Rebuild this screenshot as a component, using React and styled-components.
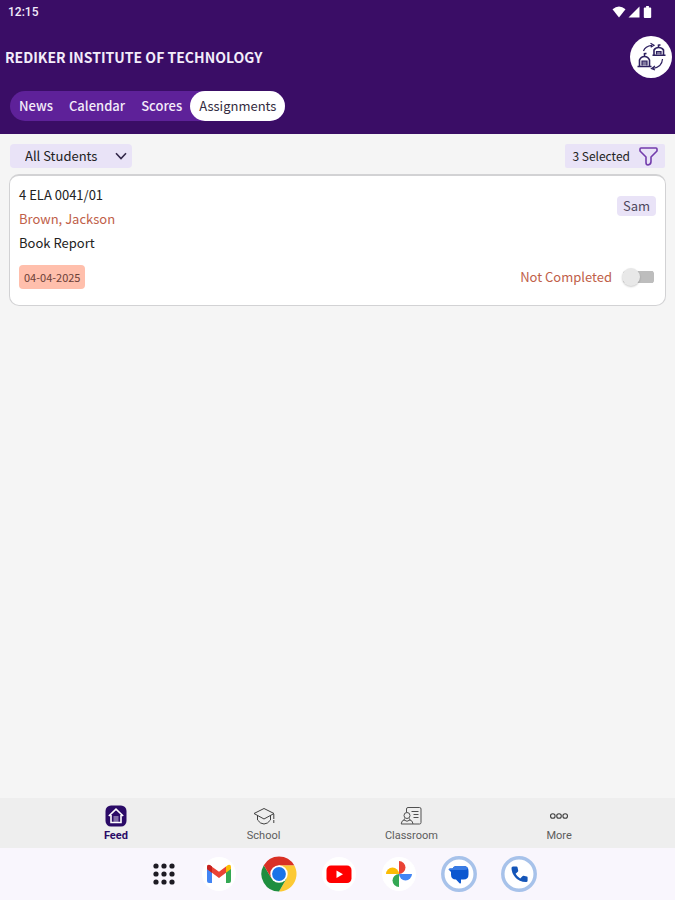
import React, { useState } from "react";
import styled, { createGlobalStyle, css } from "styled-components";

const GlobalStyle = createGlobalStyle`
  * { box-sizing: border-box; }
  body {
    margin: 0;
    background: #f5f5f5;
    color: #222;
    font-family: "Noto Sans CJK SC", "Noto Sans", sans-serif;
    font-size: 13px;
    line-height: 24px;
  }
  button, select, input { font: inherit; color: inherit; margin: 0; }
  button { border: 0; background: none; padding: 0; cursor: pointer; }
  svg { display: block; flex: none; }
`;

const Page = styled.div`
  min-height: 100vh;
  display: flex;
  flex-direction: column;
`;

const Header = styled.header`
  background: #3a0d66;
  color: #f3ecfa;
  padding-bottom: 13px;
`;

const StatusBar = styled.div`
  display: flex;
  justify-content: space-between;
  align-items: center;
  height: 24px;
  padding: 0 22px 0 8px;
  font-family: Roboto, sans-serif;
  font-size: 12px;
  font-weight: 500;
`;

const StatusIcons = styled.div`
  display: flex;
  gap: 2px;
`;

const TitleRow = styled.div`
  display: flex;
  justify-content: space-between;
  align-items: center;
  padding: 12px 3px 13px 5px;
`;

const Title = styled.h1`
  margin: 0;
  font-size: 14px;
  line-height: 24px;
  font-weight: 700;
`;

const SwitchButton = styled.button`
  display: grid;
  place-items: center;
  width: 42px;
  height: 42px;
  border-radius: 50%;
  background: #fff;
`;

const Tabs = styled.nav`
  display: inline-flex;
  margin-left: 10px;
  padding-left: 1px;
  border-radius: 15px;
  background: #5e2199;
  vertical-align: top;
`;

const Tab = styled.button`
  height: 30px;
  padding: 0 8px;
  border-radius: 15px;
  line-height: 30px;
  font-weight: 500;
  ${(p) =>
    p.$active &&
    css`
      padding: 0 9px;
      background: #fff;
      color: #332b40;
      font-weight: 400;
    `}
`;

const Main = styled.main`
  flex: 1;
  padding: 10px 9px;
`;

const Toolbar = styled.div`
  display: flex;
  justify-content: space-between;
  margin: 0 1px 6px;
`;

const StudentPicker = styled.label`
  display: flex;
  align-items: center;
  width: 122px;
  padding-right: 5px;
  border-radius: 4px;
  background: #e9e3f7;
`;

const StudentSelect = styled.select`
  flex: 1;
  min-width: 0;
  height: 24px;
  padding: 0 0 0 15px;
  border: 0;
  background: none;
  appearance: none;
  line-height: 24px;
`;

const FilterButton = styled.button`
  display: flex;
  align-items: center;
  gap: 9px;
  height: 24px;
  padding: 0 7px;
  border-radius: 2px;
  background: #e9e3f7;
  font-size: 12px;
`;

const Card = styled.article`
  padding: 7px 9px 16px;
  border: 1px solid #d2d2d4;
  border-top-width: 2px;
  border-radius: 10px;
  background: #fff;
`;

const CardRow = styled.div`
  display: flex;
  justify-content: space-between;
  align-items: ${(p) => p.$align || "center"};
  margin-top: ${(p) => (p.$spaced ? "10px" : "0")};
`;

const Line = styled.p`
  margin: 0;
  color: ${(p) => (p.$accent ? "#c06049" : "#222")};
`;

const Chip = styled.span`
  padding: 0 ${(p) => (p.$due ? "5px" : "6px")};
  border-radius: 4px;
  background: ${(p) => (p.$due ? "#ffbfac" : "#e9e3f7")};
  color: ${(p) => (p.$due ? "#6b4038" : "#4e485c")};
  font-size: ${(p) => (p.$due ? "11px" : "13px")};
  line-height: ${(p) => (p.$due ? "24px" : "20px")};
  margin-top: ${(p) => (p.$due ? "0" : "13px")};
`;

const Completion = styled.label`
  display: flex;
  align-items: center;
  gap: 10px;
  padding-right: 1px;
  color: #c06049;
`;

const Toggle = styled.input`
  appearance: none;
  display: flex;
  align-items: center;
  width: 33px;
  height: 20px;
  cursor: pointer;
  background: linear-gradient(#bdbdbd, #bdbdbd) center / 31px 12px no-repeat;
  border-radius: 10px;

  &::before {
    content: "";
    width: 18px;
    height: 18px;
    border-radius: 50%;
    background: #e8e8e8;
    box-shadow: 0 1px 2px rgba(0, 0, 0, 0.2);
  }
  &:checked { justify-content: flex-end; }
`;

const BottomNav = styled.nav`
  display: grid;
  grid-template-columns: repeat(4, 1fr);
  height: 50px;
  padding: 0 42px;
  background: #eee;
`;

const NavItem = styled.button`
  display: flex;
  flex-direction: column;
  align-items: center;
  gap: 1px;
  padding-top: 7px;
  font-family: Roboto, sans-serif;
  font-size: 11px;
  line-height: 16px;
  font-weight: ${(p) => (p.$active ? 700 : 400)};
  color: ${(p) => (p.$active ? "#2b0b67" : "#5c5c5c")};
`;

const Dock = styled.footer`
  display: flex;
  justify-content: center;
  align-items: center;
  gap: 24px;
  height: 52px;
  padding-left: 12px;
  background: #f9f6fd;
`;

const AppButton = styled.button`
  display: grid;
  place-items: center;
  width: ${(p) => (p.$narrow ? "26px" : "36px")};
  height: 36px;
`;

const WifiIcon = () => (
  <svg width="14" height="12" viewBox="0 0 14 12" aria-hidden="true">
    <path d="M.5 3.2Q7-2.2 13.5 3.2L7 11.5Z" fill="#fff" />
  </svg>
);
const SignalIcon = () => (
  <svg width="12" height="12" viewBox="0 0 12 12" aria-hidden="true">
    <path d="M11.5.5v11H.5Z" fill="#fff" />
  </svg>
);
const BatteryIcon = () => (
  <svg width="11" height="12" viewBox="0 0 11 13" aria-hidden="true">
    <path d="M4 0h3v1.5h1.500q1 0 1 1V12q0 1-1 1h-6q-1 0-1-1V2.500q0-1 1-1H4Z" fill="#fff" />
  </svg>
);

const SwitchIcon = () => (
  <svg width="30" height="30" viewBox="0 0 30 30" fill="none" stroke="#2d205f" strokeWidth="1.2" aria-hidden="true">
    <path d="M7.500 9Q9 4 16 3.300M14.500 1.300l3.500 2-3.300 2M26.500 17q-.5 8-9.500 9.500M19 24l-3.500 2.500 3.500 1.500" />
    <path d="M8.500 11v3M8.500 11.500h2M3.500 24v-6q1.500-3.500 5-3.500t5 3.500v6M1.500 24.500h14M22.500 2.500V6M22.500 3h2M18 13V8q1.500-2.500 4.700-2.500T27.500 8v5M16.500 13.200h13" strokeWidth="1.600" />
    <path d="M6 23.500v-4.500h5v4.500M20.500 12.500V9.500h4.500v3" fill="#81799f" />
  </svg>
);
const ChevronIcon = () => (
  <svg width="12" height="8" viewBox="0 0 12 8" fill="none" stroke="#33284a" strokeWidth="1.600" aria-hidden="true">
    <path d="M1 1.200 6 6.500 11 1.200" />
  </svg>
);
const FunnelIcon = () => (
  <svg width="19" height="19" viewBox="0 0 19 19" fill="none" stroke="#733cac" strokeWidth="1.600" strokeLinejoin="round" aria-hidden="true">
    <path d="M2 1h15q1 0 1 1v2L12 10v4.500q0 3-3 3.500-2 0-2-2.500V10L1 4V2q0-1 1-1Z" />
  </svg>
);

const FeedIcon = () => (
  <svg width="22" height="22" viewBox="0 0 22 22" aria-hidden="true">
    <rect x=".5" y=".5" width="21" height="21" rx="5.500" fill="#2b0b67" />
    <path d="m3.800 11 7.200-6.800 7.200 6.800M6 10v7.500h10V10" fill="none" stroke="#fff" strokeWidth="1.600" />
    <path d="M8.500 12h5M8.500 14h5M8.500 16h5" stroke="#d8d0e8" />
  </svg>
);
const SchoolIcon = () => (
  <svg width="22" height="22" viewBox="0 0 22 22" fill="none" stroke="#404040" aria-hidden="true">
    <path d="M1 8.500 11 3.500l10 5-10 5.500ZM4.500 10.500V15q3 4 6.500 4t6.500-4v-4.500M20.800 9v5M20.800 15v3" />
  </svg>
);
const ClassroomIcon = () => (
  <svg width="22" height="22" viewBox="0 0 22 22" fill="none" stroke="#505050" aria-hidden="true">
    <path d="M6.500 7V4q0-1.500 1.500-1.500h11.500q1.500 0 1.500 1.500v13.500q0 1.500-1.500 1.500H13" />
    <circle cx="7" cy="10.500" r="3" />
    <path d="M4.500 13.500 4 15q-2.500.5-2.800 4H13q-.3-3.500-3-4l-.5-1.500M4 15q3 2.500 6 0M11.500 6.500h7M13.500 9.500h5M13.500 12.500h5" />
  </svg>
);
const MoreIcon = () => (
  <svg width="22" height="22" viewBox="0 0 22 22" fill="none" stroke="#404040" strokeWidth="1.100" aria-hidden="true">
    <circle cx="4.800" cy="11" r="2.300" />
    <circle cx="11" cy="11" r="2.300" />
    <circle cx="17.200" cy="11" r="2.300" />
  </svg>
);

const DrawerIcon = () => (
  <svg width="24" height="24" viewBox="0 0 24 24" fill="#1d1b23" aria-hidden="true">
    {[4, 12, 20].map((y) => [4, 12, 20].map((x) => <circle key={`${x}-${y}`} cx={x} cy={y} r="2.600" />))}
  </svg>
);
const GmailIcon = () => (
  <svg width="36" height="36" viewBox="0 0 36 36" aria-hidden="true">
    <circle cx="18" cy="18" r="17" fill="#fff" />
    <path d="M6 12v13q0 2 2 2h3V15.500Z" fill="#4285f4" />
    <path d="M25 15.500V27h3q2 0 2-2V12Z" fill="#34a853" />
    <path d="M25 10.500v6.200l5-3.700v-2q0-3-3-2Z" fill="#fbbc04" />
    <path d="M8.500 9 18 15.700l7-5.200v6.200L18 22l-7-5.300-5-3.700v-2q0-2.500 2.500-2Z" fill="#ea4335" />
    <path d="M6 11q0-3 3-2l2 1.500v6.200L6 13Z" fill="#c5221f" />
  </svg>
);
const ChromeIcon = () => (
  <svg width="36" height="36" viewBox="0 0 36 36" aria-hidden="true">
    <path d="M18 9.300h15.200A17.500 17.500 0 0 1 18 35.500l7.500-13Z" fill="#fcc934" />
    <path d="M10.500 22.300 2.800 9.200A17.500 17.500 0 0 0 18 35.500l7.500-13Z" fill="#1e8e3e" />
    <path d="M18 9.300h15.200A17.500 17.500 0 0 0 2.800 9.200l7.600 13.100Z" fill="#d93025" />
    <circle cx="18" cy="18" r="8.700" fill="#fff" />
    <circle cx="18" cy="18" r="6.900" fill="#1a73e8" />
  </svg>
);
const YouTubeIcon = () => (
  <svg width="36" height="36" viewBox="0 0 36 36" aria-hidden="true">
    <circle cx="18" cy="18" r="17" fill="#fff" />
    <rect x="5.500" y="9.500" width="25" height="17.500" rx="4.500" fill="#f00" />
    <path d="m15.500 14.500 6.500 3.700-6.500 3.800Z" fill="#fff" />
  </svg>
);
const PhotosIcon = () => (
  <svg width="36" height="36" viewBox="0 0 36 36" aria-hidden="true">
    <circle cx="18" cy="18" r="17" fill="#fff" />
    <path d="M18 5a6.500 6.500 0 0 1 0 13Z" fill="#ea4335" />
    <path d="M31 18a6.500 6.500 0 0 1-13 0Z" fill="#4285f4" />
    <path d="M18 31a6.500 6.500 0 0 1 0-13Z" fill="#34a853" />
    <path d="M5 18a6.500 6.500 0 0 1 13 0Z" fill="#fbbc04" />
  </svg>
);
const MessagesIcon = () => (
  <svg width="36" height="36" viewBox="1 1 36 36" aria-hidden="true">
    <circle cx="19" cy="19" r="16.200" fill="#fff" stroke="#a7c2ea" strokeWidth="3.500" />
    <path d="M16 11h7.500q5 0 5 5v3.500q0 5-5 5H21v3q0 1.500-1.500.8L16 24.500q-5 0-5-5V17l-2-2q-1-1.500 1-1.500h2.500Q13.500 11 16 11Z" fill="#0b57d0" />
    <path d="M16 11h7.500q3.500 0 4.500 2.500-1 1.500-4 1.500H9q-1-1.500 1-1.500h2.500Q13.500 11 16 11Z" fill="#397be4" />
  </svg>
);
const PhoneIcon = () => (
  <svg width="36" height="36" viewBox="1 1 36 36" aria-hidden="true">
    <circle cx="19" cy="19" r="16.200" fill="#fff" stroke="#a7c2ea" strokeWidth="3.500" />
    <path d="M13 11.500h3.500q.8 0 1 .8l.7 3.200q.1.700-.4 1.200L15.600 18.800q1.500 3 4.600 4.600l2.200-2.200q.5-.5 1.200-.4l3.200.7q.8.200.8 1V25.500q0 1.500-1.500 1.500Q19 27 15.200 22.200 11.500 18 11.500 13q0-1.500 1.500-1.500Z" fill="#1455b8" />
  </svg>
);

const tabs = ["News", "Calendar", "Scores", "Assignments"];
const navItems = [
  { label: "Feed", Icon: FeedIcon },
  { label: "School", Icon: SchoolIcon },
  { label: "Classroom", Icon: ClassroomIcon },
  { label: "More", Icon: MoreIcon },
];
const apps = [
  { label: "All apps", Icon: DrawerIcon, narrow: true },
  { label: "Gmail", Icon: GmailIcon },
  { label: "Chrome", Icon: ChromeIcon },
  { label: "YouTube", Icon: YouTubeIcon },
  { label: "Photos", Icon: PhotosIcon },
  { label: "Messages", Icon: MessagesIcon },
  { label: "Phone", Icon: PhoneIcon },
];

export default function App() {
  const [tab, setTab] = useState("Assignments");
  const [section, setSection] = useState("Feed");
  const [done, setDone] = useState(false);

  return (
    <Page>
      <GlobalStyle />
      <Header>
        <StatusBar>
          <span>12:15</span>
          <StatusIcons>
            <WifiIcon />
            <SignalIcon />
            <BatteryIcon />
          </StatusIcons>
        </StatusBar>
        <TitleRow>
          <Title>REDIKER INSTITUTE OF TECHNOLOGY</Title>
          <SwitchButton aria-label="Switch school">
            <SwitchIcon />
          </SwitchButton>
        </TitleRow>
        <Tabs>
          {tabs.map((name) => (
            <Tab key={name} $active={name === tab} onClick={() => setTab(name)}>
              {name}
            </Tab>
          ))}
        </Tabs>
      </Header>
      <Main>
        <Toolbar>
          <StudentPicker>
            <StudentSelect aria-label="Student">
              <option>All Students</option>
            </StudentSelect>
            <ChevronIcon />
          </StudentPicker>
          <FilterButton>
            3 Selected
            <FunnelIcon />
          </FilterButton>
        </Toolbar>
        <Card>
          <CardRow $align="flex-start">
            <div>
              <Line>4 ELA 0041/01</Line>
              <Line $accent>Brown, Jackson</Line>
              <Line>Book Report</Line>
            </div>
            <Chip>Sam</Chip>
          </CardRow>
          <CardRow $spaced>
            <Chip $due>04-04-2025</Chip>
            <Completion>
              Not Completed
              <Toggle type="checkbox" checked={done} onChange={(e) => setDone(e.target.checked)} />
            </Completion>
          </CardRow>
        </Card>
      </Main>
      <BottomNav>
        {navItems.map(({ label, Icon }) => (
          <NavItem key={label} $active={label === section} onClick={() => setSection(label)}>
            <Icon />
            {label}
          </NavItem>
        ))}
      </BottomNav>
      <Dock>
        {apps.map(({ label, Icon, narrow }) => (
          <AppButton key={label} aria-label={label} $narrow={narrow}>
            <Icon />
          </AppButton>
        ))}
      </Dock>
    </Page>
  );
}
